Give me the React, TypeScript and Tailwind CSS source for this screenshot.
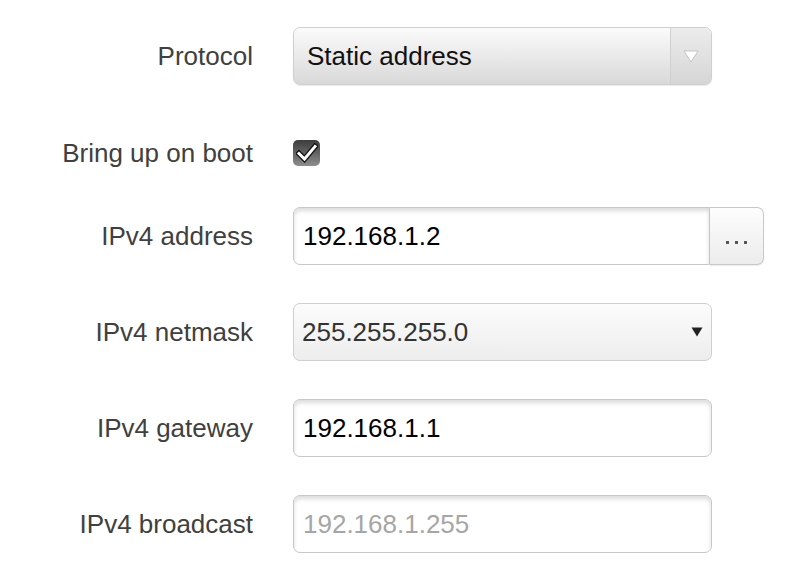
import React from 'react';

const font = { fontFamily: '"Liberation Sans", Arial, Helvetica, sans-serif' };

function Row({ label, children, className = '' }: { label: string; children: React.ReactNode; className?: string }) {
  return (
    <div className={`flex h-[58px] items-center ${className}`}>
      <div className="w-[253px] shrink-0 text-right text-[26px] leading-none text-[#404040]">{label}</div>
      <div className="ml-[40px] flex items-center">{children}</div>
    </div>
  );
}

function TextBox({ value, placeholder }: { value?: string; placeholder?: string }) {
  return (
    <div className="flex h-[58px] w-[419px] items-center rounded-[7px] border border-[#c8c8c8] bg-white px-[9px] text-[26px] shadow-[inset_0_3px_4px_rgba(0,0,0,0.14)]">
      {value ? (
        <span className="text-black">{value}</span>
      ) : (
        <span className="text-[#a6a6a6]">{placeholder}</span>
      )}
    </div>
  );
}

export default function App() {
  return (
    <div className="h-[570px] w-[794px] bg-white" style={font}>
      <div className="flex flex-col pt-[27px]">
        <Row label="Protocol">
          <div className="flex h-[58px] w-[419px] overflow-hidden rounded-[7px] border border-[#cfcfcf] bg-gradient-to-b from-[#fbfbfb] to-[#d9d9d9] shadow-[0_1px_1px_rgba(0,0,0,0.08)]">
            <div className="flex flex-1 items-center px-[13px] text-[26px] text-[#111]">Static address</div>
            <div className="flex w-[41px] items-center justify-center border-l border-[#d0d0d0] bg-gradient-to-b from-[#ececec] to-[#d6d6d6]">
              <svg width="16" height="13" viewBox="0 0 16 13">
                <path d="M1 1 L15 1 L8 12 Z" fill="#ffffff" stroke="#c4c4c4" strokeWidth="1" strokeLinejoin="round" />
              </svg>
            </div>
          </div>
        </Row>

        <Row label="Bring up on boot" className="mt-[39px]">
          <div className="flex h-[26px] w-[27px] items-center justify-center rounded-[5px] bg-gradient-to-b from-[#3c3c3c] to-[#8e8e8e]">
            <svg width="22" height="20" viewBox="0 0 22 20">
              <path d="M3 10.5 L8.5 16 L19 3.5" fill="none" stroke="#111" strokeWidth="5.5" strokeLinecap="square" />
              <path d="M3 10.5 L8.5 16 L19 3.5" fill="none" stroke="#fff" strokeWidth="3" strokeLinecap="square" />
            </svg>
          </div>
        </Row>

        <Row label="IPv4 address" className="mt-[25px]">
          <div className="flex">
            <div className="flex h-[58px] w-[417px] items-center rounded-l-[7px] border border-[#c8c8c8] bg-white px-[9px] text-[26px] text-black shadow-[inset_0_3px_4px_rgba(0,0,0,0.14)]">
              192.168.1.2
            </div>
            <div className="flex h-[58px] w-[54px] items-center justify-center gap-[6px] rounded-r-[7px] border border-l-0 border-[#c8c8c8] bg-gradient-to-b from-[#fdfdfd] to-[#ececec] pt-[12px] shadow-[0_1px_1px_rgba(0,0,0,0.08)]">
              <span className="h-[3px] w-[3px] bg-[#555]" />
              <span className="h-[3px] w-[3px] bg-[#555]" />
              <span className="h-[3px] w-[3px] bg-[#555]" />
            </div>
          </div>
        </Row>

        <Row label="IPv4 netmask" className="mt-[38px]">
          <div className="flex h-[58px] w-[419px] items-center justify-between rounded-[7px] border border-[#cfcfcf] bg-gradient-to-b from-[#fcfcfc] to-[#ededed] pl-[8px] pr-[8px] text-[26px] text-[#333]">
            <span>255.255.255.0</span>
            <svg width="12" height="10" viewBox="0 0 12 10">
              <path d="M0.5 0.5 L11.5 0.5 L6 9.5 Z" fill="#222" />
            </svg>
          </div>
        </Row>

        <Row label="IPv4 gateway" className="mt-[38px]">
          <TextBox value="192.168.1.1" />
        </Row>

        <Row label="IPv4 broadcast" className="mt-[38px]">
          <TextBox placeholder="192.168.1.255" />
        </Row>
      </div>
    </div>
  );
}
